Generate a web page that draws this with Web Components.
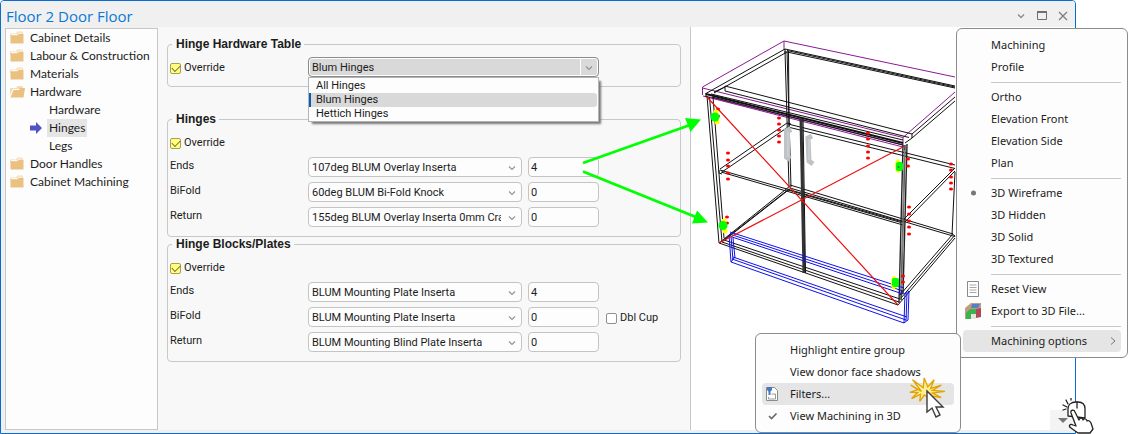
<!DOCTYPE html>
<html lang="en">
<head>
<meta charset="utf-8">
<title>Floor 2 Door Floor</title>
<style>
body { margin: 0; background: #fff; }
</style>
</head>
<body>
<cabinet-app></cabinet-app>

<script>
const define = (name, css, html, setup) => {
  const template = document.createElement('template');
  template.innerHTML = `<style>*{box-sizing:border-box}${css}</style>${html}`;
  customElements.define(name, class extends HTMLElement {
    constructor() {
      super();
      this.attachShadow({ mode: 'open' }).append(template.content.cloneNode(true));
    }
    connectedCallback() { if (setup) setup(this, this.shadowRoot); }
  });
};

/* ---------- Title bar ---------- */
define('title-bar', `
  :host { display: flex; align-items: center; justify-content: space-between; height: 26px; padding: 3px 3px 0 5px; background: #f0f0f0; }
  h1 { margin: 0; font: 15px/22px "Open Sans", sans-serif; color: #0a78d4; }
  .buttons { display: flex; gap: 3px; }
  button { width: 18px; height: 18px; padding: 0; border: 0; background: none; }
  svg { display: block; margin: auto; }
`, `
  <h1><slot></slot></h1>
  <div class="buttons">
    <button aria-label="Minimise"><svg width="12" height="12" fill="none" stroke="#8a8a8a"><path d="M3 4.500l3 3 3-3" stroke-width="1.300"/></svg></button>
    <button aria-label="Maximise"><svg width="12" height="12" fill="none" stroke="#707070"><path d="M1.500 1.500h9v8h-9z" stroke-width="1"/><path d="M1 2h10" stroke-width="2"/></svg></button>
    <button aria-label="Close"><svg width="12" height="12" fill="none" stroke="#7c7c7c"><path d="M2 2l8 8M10 2l-8 8" stroke-width="1.200"/></svg></button>
  </div>
`);

/* ---------- Navigation tree ---------- */
define('nav-tree', `
  :host { display: block; border: 1px solid #c8c8c8; background: #fdfdfd; }
`, `<nav><slot></slot></nav>`);

define('tree-item', `
  :host { display: block; }
  a { display: flex; align-items: center; height: 18px; padding-left: 4px; color: #1c1c1c; text-decoration: none; font: 12px/18px Lato, sans-serif; white-space: nowrap; }
  svg { flex: none; margin-right: 2px; }
  .label { padding: 0 2px; }
  :host([level="2"]) a { padding-left: 22px; }
  :host([level="2"]) svg { margin-right: 3px; }
  :host([current]) .label { background: #e5e5e5; }
  svg > * { display: none; }
  :host(:not([level]):not([open])) .closed,
  :host([open]) .opened,
  :host([current]) .arrow { display: inline; }
`, `
  <a href="#">
    <svg width="16" height="16" viewBox="0 0 16 16" aria-hidden="true">
      <g class="closed"><path d="M0 3.500h6l1.500-2H12l1 1V7H0z" fill="#f3dcb4"/><path d="M1 5.500h6.500L9 4h4.500v9.500H0.500V5.500z" fill="#ebc182"/><path d="M1 4.500h6L8.500 3H12" stroke="#fff" stroke-width=".8" fill="none"/></g>
      <g class="opened"><path d="M0 4h6l1.500-2H12l1 1V5H3L0 11z" fill="#f3dcb4"/><path d="M3.500 6H9l1-2h5l-1.500 9.500H.5z" fill="#ebc182"/></g>
      <path class="arrow" d="M2 5.500h6V2l6 6-6 6v-3.500H2z" fill="#5252c8"/>
    </svg>
    <span class="label"><slot></slot></span>
  </a>
`);

/* ---------- Form parts ---------- */
define('group-box', `
  :host { display: block; font: 11px/18px Roboto, sans-serif; color: #1c1c1c; }
  fieldset { margin: 0; min-width: 0; padding: 6px 1px 9px; border: 1px solid #c8c8c8; border-radius: 4px; }
  legend { margin: 0 0 0 3px; padding: 0 3px 0 4px; font: bold 12px/14px "Liberation Sans", sans-serif; }
  .rows { display: grid; gap: 5px; }
`, `<fieldset><legend></legend><div class="rows"><slot></slot></div></fieldset>`,
(host, root) => { root.querySelector('legend').textContent = host.getAttribute('caption'); });

define('form-row', `
  :host { display: grid; grid-template-columns: 133px 214px 71px 1fr; column-gap: 6px; height: 20px; }
  :host([wide]) { grid-template-columns: 133px 291px 1fr; }
`, `<slot></slot>`);

define('row-label', `:host { display: block; line-height: 18px; padding-left: 1px; }`, `<slot></slot>`);

define('check-field', `
  :host { display: flex; align-items: center; }
  label { display: flex; align-items: center; gap: 3px; white-space: nowrap; line-height: 20px; padding-top: 1px; }
  input { appearance: none; width: 11px; height: 11px; margin: 0 0 0 1px; border: 1px solid #909090; border-radius: 2px; background: #fff; display: grid; place-items: center; }
  input:checked { border-color: #a8a04c; background: #ffff80; }
  input:checked::before { content: ""; width: 7px; height: 4px; margin-bottom: 2px; border: solid #77733c; border-width: 0 0 1px 1px; transform: rotate(-45deg); }
`, `<label><input type="checkbox"><slot></slot></label>`,
(host, root) => { root.querySelector('input').checked = host.hasAttribute('checked'); });

define('number-field', `
  :host { display: block; }
  input { display: block; width: 100%; height: 20px; padding: 0 2px; border: 1px solid #c4c4c4; border-radius: 4px; background: #fdfdfd; color: #1c1c1c; font: inherit; }
`, `<input type="text" inputmode="numeric">`,
(host, root) => {
  const input = root.querySelector('input');
  input.value = host.getAttribute('value');
  input.setAttribute('aria-label', host.getAttribute('label'));
});

define('select-field', `
  :host { display: block; position: relative; }
  select { appearance: none; display: block; width: 100%; height: 20px; padding: 2px 20px 0 3px; border: 1px solid #c4c4c4; border-radius: 4px; background: #fdfdfd; color: #1c1c1c; font: inherit; line-height: 16px; text-overflow: clip; }
  .chevron { position: absolute; right: 4px; top: 5px; pointer-events: none; }
  :host([open]) select { border-color: #8c8c8c; background: #d9d9d9; box-shadow: inset 0 0 0 1px #fff; }
  :host([open])::after { content: ""; position: absolute; right: 18px; top: 2px; bottom: 2px; width: 1px; background: #fff; }
`, `
  <select></select>
  <svg class="chevron" width="12" height="12" fill="none" stroke="#949494"><path d="M3 4.500l3 3 3-3" stroke-width="1.200"/></svg>
  <slot></slot>
`, (host, root) => {
  const select = root.querySelector('select');
  select.setAttribute('aria-label', host.getAttribute('label'));
  select.add(new Option(host.getAttribute('value')));
});

define('option-list', `
  :host { position: absolute; z-index: 2; left: 0; right: 0; top: 20px; border: 1px solid #b4b4b4; background: #fdfdfd; box-shadow: 3px 3px 2px -1px #777; padding: 1px 1px 0 0; }
  ul { margin: 0; padding: 0; list-style: none; }
  ::slotted(li) { line-height: 14px; padding-left: 5px; border-left: 2px solid #fdfdfd; }
  ::slotted(li[aria-selected="true"]) { background: #d9d9d9; border-left-color: #0a5cad; border-radius: 0 3px 3px 0; }
`, `<ul role="listbox"><slot></slot></ul>`);

/* ---------- Cabinet wireframe ---------- */
define('cabinet-view', `
  :host { display: block; position: relative; border-left: 1px solid #c8c8c8; background: #fff; }
  svg { display: block; overflow: visible; }
  .corner { position: absolute; right: 0; bottom: 0; width: 25px; height: 20px; background: #f4f4f4; display: grid; place-items: center; }
`, `
  <svg width="384" height="403" viewBox="691 27 384 403" fill="none" role="img" aria-label="3D wireframe of the cabinet">
    <g stroke="#8a1a94">
      <path d="M702.500 95V87L784 41L955 77M784 41V50M702.500 88L903 137.500V147L703 96M903 137.500L955 92M705 96L903 145"/>
    </g>
    <g stroke="#111">
      <path d="M705 94L785 49L955 86M714 93L787 52L955 88M787 50.500L955 87M785 49V54"/>
      <path d="M725 91V86L912 134L955 97M725 91L909 137.500M912 134V138L955 101M905 143L912 138M714 92L725 87M711 94L903 140"/>
      <path d="M785 51L789 187M787 51L791 187M788.500 51L789 127" />
      <path d="M706 94L903 143" stroke-width="2"/>
      <path d="M706 94V97M712 97L903 145M788 124L955 165M788 127L955 168.500"/>
      <path d="M707 96L719 243M709.500 97L722 242M713 97L724 238"/>
      <path d="M720 169L787 123L791 124M722 172L788 127M719 170V173L722 174"/>
      <path d="M720 170L903 222M721 172L903 225M955 168L903 220M955 171L905 222"/>
      <path d="M719 243L790 186M722 242L791 188M725 239L789 189"/>
      <path d="M790 185L953 234M790 188L953 236M788 190L901 222.500"/>
      <path d="M724 240L900 299M722 242L899 302M719 243L898 305L955 238M900 295L952 235M901 298L955 235"/>
      <path d="M955 172L952 235M952 233L955 237"/>
    </g>
    <path d="M903 145L899 303M905 145L901 300M907 144L903 294" stroke="#222" stroke-width="1.400"/>
    <path d="M801 118L804 273" stroke="#333" stroke-width="3"/>
    <path d="M803 118L805.500 273" stroke="#111"/>
    <path d="M904.500 150L901.500 290" stroke="#888"/>
    <g stroke="#1010e8">
      <path d="M730 232L904 288M731 234.500L903 291M732 237L903 294M729 235L731 262L904 323L905 293M733 257L907 317M732 259L906 320M731 236L733 260M733 238L735 258M904 323L908 320L909 291L905 294M907 293L906 321M731 262L735 257M729 235L732 232"/>
    </g>
    <path d="M707 97L898 305M719 243L903 147" stroke="#f01010" stroke-width="1.200"/>
    <path d="M791 129L787 131V157L790 159" stroke="#bfc2c6" stroke-width="6"/>
    <path d="M812 136L808 138L809 161L813 164" stroke="#bfc2c6" stroke-width="5"/>
    <path d="M788 132V157M809 139V160" stroke="#d6d8da"/>
    <g class="dots" fill="#f00"></g>
    <g fill="#ff0"><circle cx="716" cy="112" r="2.500"/><circle cx="717" cy="122" r="2.500"/><circle cx="724" cy="221" r="2.500"/><circle cx="725" cy="231" r="2.500"/><path d="M896 160l3-1 2 6-2 8-3-1-1-6zM892 277l3-1 2 6-2 8-3-1-1-6z"/></g>
    <g fill="#0f0"><circle cx="715" cy="117" r="4.500"/><circle cx="723" cy="225.500" r="4.500"/><rect x="896" y="162" width="7" height="9" rx="2"/><rect x="892" y="278" width="7" height="9" rx="2"/></g>
    <circle cx="898.500" cy="167" r="1" fill="#567"/>
    <g stroke="#0f0" stroke-width="2.800"><path d="M583 163L690 125M583 171.500L697 217.500"/></g>
    <path d="M701 119.500L685 118L690.500 132zM708 222.500L697 210.500L692 223.500z" fill="#0f0"/>
  </svg>
  <span class="corner"><svg width="12" height="10" aria-hidden="true"><path d="M1 3h10L6 8z" fill="#777"/></svg></span>
`, (host, root) => {
  const columns = [
    [718, [109, 116]], [779, [118, 124, 130, 136, 142]], [728, [153, 160, 166, 173, 179]],
    [727, [217, 223]], [868, [133, 139, 146, 152, 158]], [908, [159, 166]],
    [951, [164, 170, 177, 183, 189]], [909, [207, 214, 221, 227, 234]], [903, [276, 282]]
  ];
  root.querySelector('.dots').innerHTML = columns.map(([x, ys]) =>
    ys.map(y => `<ellipse cx="${x}" cy="${y}" rx="2" ry="1.600"/>`).join('')).join('');
});

/* ---------- Context menus ---------- */
define('context-menu', `
  :host { display: block; position: absolute; z-index: 3; padding: 5px 6px 5px; border: 1px solid #8c8c8c; border-radius: 6px; background: #fdfdfd; }
`, `<div role="menu"><slot></slot></div>`);

define('menu-item', `
  :host { display: block; }
  button { display: grid; grid-template-columns: 28px 1fr 14px; align-items: center; width: 100%; height: 22px; padding: 0; border: 0; border-radius: 4px; background: none; color: #1c1c1c; font: 11px/22px "Noto Sans", sans-serif; text-align: left; white-space: nowrap; }
  :host([active]) button { background: #e5e5e5; }
  .icon, .more { display: grid; }
  .icon { padding-left: 1px; }
  .more { visibility: hidden; }
  :host([submenu]) .more { visibility: visible; }
`, `
  <button role="menuitem">
    <span class="icon"><slot name="icon"></slot></span>
    <span><slot></slot></span>
    <svg class="more" width="12" height="12" fill="none" stroke="#777"><path d="M4 2.500l4 3.500-4 3.500"/></svg>
  </button>
`);

define('menu-separator', `
  :host { display: block; height: 1px; margin: 4px 0 3px 28px; background: #c8c8c8; }
`, ``);

/* ---------- Pointer artwork ---------- */
define('click-burst', `
  :host { display: block; position: absolute; z-index: 4; pointer-events: none; right: 4px; bottom: 12px; }
  svg { display: block; overflow: visible; }
`, `
  <svg width="44" height="44" viewBox="0 0 44 44" aria-hidden="true">
    <path d="M15 16L5 3l12 9L18 1l4 10 7-8-4 10 12-4-10 6 14 1-14 2 10 5-12-2 1 4-8-5-5 7 1-8-10 5 7-7-9 0 9-3-8-5z" transform="translate(-4 1) scale(.9)" fill="#fff19a" stroke="#e2a400" stroke-width="1.500"/>
    <path d="M18 16v21l5-4 4 9 4-2-4-8h7z" transform="translate(-3 -1)" fill="#fff" stroke="#3c3c3c" stroke-width="1.400"/>
  </svg>
`);

define('hand-pointer', `
  :host { display: block; position: absolute; z-index: 4; pointer-events: none; right: 34px; bottom: 0; }
  svg { display: block; }
`, `
  <svg width="34" height="36" viewBox="0 0 34 36" fill="none" stroke="#222" stroke-width="1.300" stroke-linecap="round" stroke-linejoin="round" aria-hidden="true">
    <path d="M8 18V11c0-4 3-7 8-7h2c5 0 7 3 7 7v9z" fill="#fff"/>
    <path d="M17 4v6M3 7l4 2M6 2l2 4M11 0l0 2M3 12l3-1"/>
    <path d="M18 35l-7-5c-3-2-1-5 2-3l3 1-5-13c-1-3 3-4 4-1l4 8c1-3 4-2 4 0 1-2 4-1 4 1 2-1 3 0 4 2l2 6-3 4z" fill="#fff"/>
  </svg>
`);

/* ---------- Page ---------- */
define('cabinet-app', `
  :host { display: block; position: relative; min-height: 100vh; padding-right: 52px; display: flex; }
  .window { flex: 1; min-width: 0; display: flex; flex-direction: column; border: 1px solid #0a6cd0; border-radius: 4px 4px 0 0; background: #f0f0f0; overflow: hidden; }
  main { flex: 1; display: grid; grid-template-columns: 153px minmax(0, 532fr) minmax(0, 385fr); padding: 0 0 3px 4px; background: #f0f0f0; }
  nav-tree { margin-top: 1px; }
  form { padding: 10px 9px 0; background: #f8f8f8; }
  .first { margin-bottom: 25px; }
  .view-menu { right: 0; top: 28px; width: 172px; }
  .machining-menu { right: 167px; top: 333px; width: 206px; }
  .view-menu menu-item svg, .machining-menu menu-item svg { display: block; }
`, `
  <div class="window">
    <title-bar>Floor 2 Door Floor</title-bar>
    <main>
      <nav-tree>
        <tree-item>Cabinet Details</tree-item>
        <tree-item>Labour &amp; Construction</tree-item>
        <tree-item>Materials</tree-item>
        <tree-item open>Hardware</tree-item>
        <tree-item level="2">Hardware</tree-item>
        <tree-item level="2" current>Hinges</tree-item>
        <tree-item level="2">Legs</tree-item>
        <tree-item>Door Handles</tree-item>
        <tree-item>Cabinet Machining</tree-item>
      </nav-tree>
      <form>
        <group-box class="first" caption="Hinge Hardware Table">
          <form-row wide>
            <check-field checked>Override</check-field>
            <select-field open label="Hinge hardware table" value="Blum Hinges">
              <option-list>
                <li role="option">All Hinges</li>
                <li role="option" aria-selected="true">Blum Hinges</li>
                <li role="option">Hettich Hinges</li>
              </option-list>
            </select-field>
          </form-row>
        </group-box>
        <group-box caption="Hinges">
          <form-row><check-field checked>Override</check-field></form-row>
          <form-row><row-label>Ends</row-label><select-field label="Ends" value="107deg BLUM Overlay Inserta"></select-field><number-field label="Ends count" value="4"></number-field></form-row>
          <form-row><row-label>BiFold</row-label><select-field label="BiFold" value="60deg BLUM Bi-Fold Knock"></select-field><number-field label="BiFold count" value="0"></number-field></form-row>
          <form-row><row-label>Return</row-label><select-field label="Return" value="155deg BLUM Overlay Inserta 0mm Crank"></select-field><number-field label="Return count" value="0"></number-field></form-row>
        </group-box>
        <group-box caption="Hinge Blocks/Plates">
          <form-row><check-field checked>Override</check-field></form-row>
          <form-row><row-label>Ends</row-label><select-field label="Ends plate" value="BLUM Mounting Plate Inserta"></select-field><number-field label="Ends plate count" value="4"></number-field></form-row>
          <form-row><row-label>BiFold</row-label><select-field label="BiFold plate" value="BLUM Mounting Plate Inserta"></select-field><number-field label="BiFold plate count" value="0"></number-field><check-field>Dbl Cup</check-field></form-row>
          <form-row><row-label>Return</row-label><select-field label="Return plate" value="BLUM Mounting Blind Plate Inserta"></select-field><number-field label="Return plate count" value="0"></number-field></form-row>
        </group-box>
      </form>
      <cabinet-view></cabinet-view>
    </main>
  </div>

  <context-menu class="view-menu">
    <menu-item>Machining</menu-item>
    <menu-item>Profile</menu-item>
    <menu-separator></menu-separator>
    <menu-item>Ortho</menu-item>
    <menu-item>Elevation Front</menu-item>
    <menu-item>Elevation Side</menu-item>
    <menu-item>Plan</menu-item>
    <menu-separator></menu-separator>
    <menu-item><svg slot="icon" width="18" height="16"><circle cx="9.500" cy="8" r="2.500" fill="#777"/></svg>3D Wireframe</menu-item>
    <menu-item>3D Hidden</menu-item>
    <menu-item>3D Solid</menu-item>
    <menu-item>3D Textured</menu-item>
    <menu-separator></menu-separator>
    <menu-item><svg slot="icon" width="18" height="16" fill="none" stroke="#8a8a8a"><path d="M3.500 .5h11v15h-11z" fill="#fff"/><path d="M5.500 4h7M5.500 6.500h7M5.500 9h7M5.500 11.500h7" stroke="#a8a8a8"/></svg>Reset View</menu-item>
    <menu-item><svg slot="icon" width="18" height="16"><path d="M1 5l6-5h10v9l-6 7H1z" fill="#c49a80"/><path d="M8 1h8l-2 4H7z" fill="#5580c8"/><path d="M2 10l4-4h6v5l-5 0v5H2z" fill="#3cb44c"/><path d="M12 6l5-1v9l-5 1z" fill="#b04858"/><path d="M7 11h5v5H7z" fill="#e8e4e0"/></svg>Export to 3D File...</menu-item>
    <menu-separator></menu-separator>
    <menu-item active submenu>Machining options</menu-item>
  </context-menu>

  <context-menu class="machining-menu">
    <menu-item>Highlight entire group</menu-item>
    <menu-item>View donor face shadows</menu-item>
    <menu-item active><svg slot="icon" width="18" height="16"><path d="M3.500 1.500h8l3 3v10h-11z" fill="#fff" stroke="#8a8a8a"/><path d="M4 1h5v3L7.500 5.500V9h-2V5.500L4 4z" fill="#4a78c0"/><path d="M8.500 8h4v5h-7v-2" fill="none" stroke="#999"/></svg>Filters...</menu-item>
    <menu-item><svg slot="icon" width="18" height="16" fill="none" stroke="#666" stroke-width="1.600"><path d="M6 8l2.500 2.500 5-5"/></svg>View Machining in 3D</menu-item>
    <click-burst></click-burst>
  </context-menu>
  <hand-pointer></hand-pointer>
`);
</script>
</body>
</html>
